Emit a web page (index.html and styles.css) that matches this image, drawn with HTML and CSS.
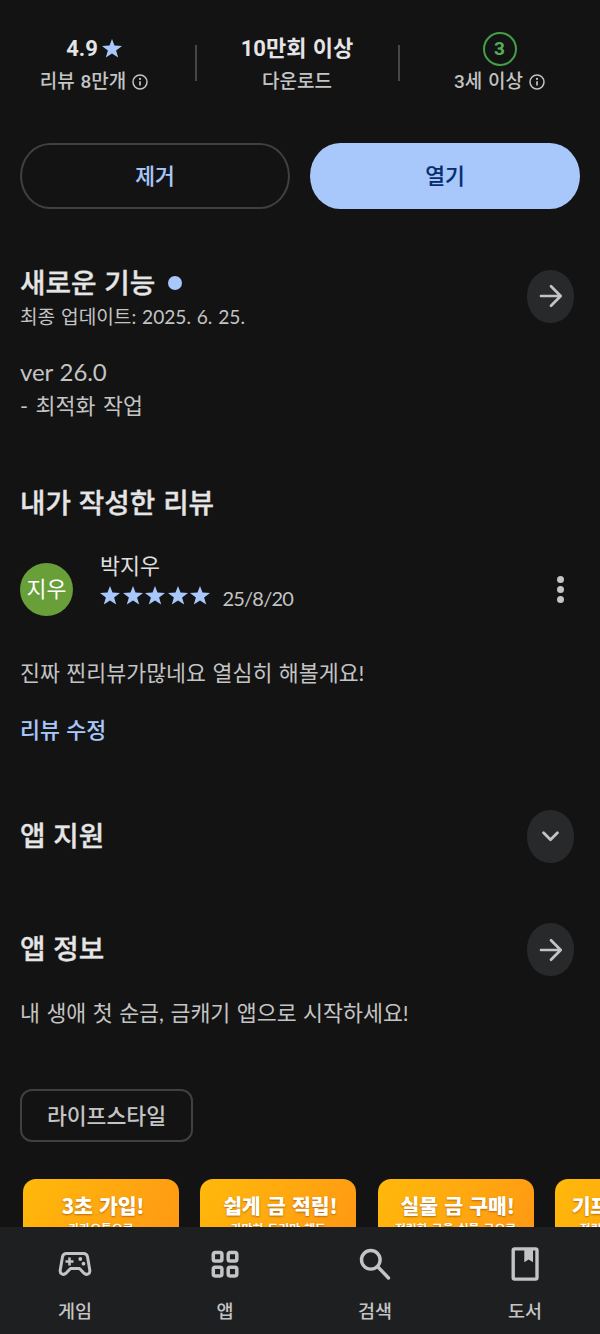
FILE: index.html
```html
<!DOCTYPE html>
<html lang="ko">
<head>
<meta charset="utf-8">
<title>앱 세부정보</title>
<link rel="stylesheet" href="styles.css">
</head>
<body>
<svg class="defs" aria-hidden="true">
  <symbol id="star" viewBox="0 0 20 19"><path d="M10 0l2.500 6.600 7.500.3-5.900 4.500 2.100 7.200L10 14.500l-6.200 4.100 2.100-7.200L0 6.900l7.500-.3z"/></symbol>
  <symbol id="arrow" viewBox="0 0 24 24"><path d="M2 12h19.500M12 2.300l9.700 9.700L12 21.700" fill="none" stroke="currentColor" stroke-width="2.700" stroke-linecap="round" stroke-linejoin="round"/></symbol>
  <symbol id="info" viewBox="0 0 16 16"><circle cx="8" cy="8" r="7" fill="none" stroke="currentColor" stroke-width="1.500"/><path d="M8 7.200v4.300" stroke="currentColor" stroke-width="1.700"/><circle cx="8" cy="4.900" r="1.050"/></symbol>
</svg>
<div class="screen">
  <main class="content">
    <section class="stats">
      <div class="stat stat-rating">
        <div class="stat-value">4.9<svg class="value-star"><use href="#star"/></svg></div>
        <div class="stat-label">리뷰 8만개<svg class="info"><use href="#info"/></svg></div>
      </div>
      <div class="divider"></div>
      <div class="stat">
        <div class="stat-value">10만회 이상</div>
        <div class="stat-label">다운로드</div>
      </div>
      <div class="divider"></div>
      <div class="stat">
        <div class="stat-value"><span class="age">3</span></div>
        <div class="stat-label">3세 이상<svg class="info"><use href="#info"/></svg></div>
      </div>
    </section>

    <div class="actions">
      <button class="btn btn-outline">제거</button>
      <button class="btn btn-filled">열기</button>
    </div>

    <section class="whats-new">
      <header class="head">
        <div>
          <h2 class="title">새로운 기능<span class="dot"></span></h2>
          <p class="updated">최종 업데이트: 2025. 6. 25.</p>
        </div>
        <button class="round"><svg class="icon-arrow"><use href="#arrow"/></svg></button>
      </header>
      <p class="version">ver 26.0</p>
      <p class="body note">- 최적화 작업</p>
    </section>

    <section class="my-review">
      <h2 class="title">내가 작성한 리뷰</h2>
      <div class="reviewer">
        <div class="avatar">지우</div>
        <div class="who">
          <div class="name">박지우</div>
          <div class="rating">
            <svg class="star"><use href="#star"/></svg><svg class="star"><use href="#star"/></svg><svg class="star"><use href="#star"/></svg><svg class="star"><use href="#star"/></svg><svg class="star"><use href="#star"/></svg>
            <span class="date">25/8/20</span>
          </div>
        </div>
        <div class="more"><i></i><i></i><i></i></div>
      </div>
      <p class="body">진짜 찐리뷰가많네요 열심히 해볼게요!</p>
      <a class="edit">리뷰 수정</a>
    </section>

    <section class="head support">
      <h2 class="title">앱 지원</h2>
      <button class="round"><svg class="icon-chevron" viewBox="0 0 16 10"><path d="M1.500 1.500L8 8l6.500-6.500" fill="none" stroke="currentColor" stroke-width="2.600" stroke-linecap="round" stroke-linejoin="round"/></svg></button>
    </section>

    <section class="about">
      <header class="head">
        <h2 class="title">앱 정보</h2>
        <button class="round"><svg class="icon-arrow"><use href="#arrow"/></svg></button>
      </header>
      <p class="body">내 생애 첫 순금, 금캐기 앱으로 시작하세요!</p>
      <span class="chip">라이프스타일</span>
    </section>

    <div class="shots">
      <div class="shot"><b>3초 가입!</b><small>카카오톡으로</small></div>
      <div class="shot"><b>쉽게 금 적립!</b><small>가만히 두기만 해도</small></div>
      <div class="shot"><b>실물 금 구매!</b><small>적립한 금을 실물 금으로</small></div>
      <div class="shot"><b>기프티콘 교환!</b><small>적립한 금을 기프티콘</small></div>
    </div>
  </main>

  <nav class="nav">
    <a class="tab"><svg class="nav-icon" viewBox="0 0 36 36"><path d="M9.500 7.500h17c2.100 0 3.600 1.300 4 3.300l2.300 13.400c.5 3.700-3.300 5.400-5.800 3l-4.500-4.700h-9l-4.500 4.700c-2.500 2.400-6.300.7-5.800-3l2.300-13.400c.4-2 1.900-3.300 4-3.300z" fill="none" stroke="currentColor" stroke-width="3" stroke-linejoin="round"/><path d="M12.500 11.500v8M8.500 15.500h8" stroke="currentColor" stroke-width="2.600"/><circle cx="23.300" cy="13" r="1.900"/><circle cx="26.500" cy="17.700" r="1.900"/></svg><span>게임</span></a>
    <a class="tab"><svg class="nav-icon" viewBox="0 0 36 36"><g fill="none" stroke="currentColor" stroke-width="3.500"><rect x="6.300" y="6.400" width="8.600" height="8.600" rx="1.800"/><rect x="21.200" y="6.400" width="8.600" height="8.600" rx="1.800"/><rect x="6.300" y="21.300" width="8.600" height="8.600" rx="1.800"/><rect x="21.200" y="21.300" width="8.600" height="8.600" rx="1.800"/></g></svg><span>앱</span></a>
    <a class="tab"><svg class="nav-icon" viewBox="0 0 36 36"><g fill="none" stroke="currentColor" stroke-width="3.400" stroke-linecap="round"><circle cx="13.800" cy="13.800" r="9.300"/><path d="M21 21l10.500 11"/></g></svg><span>검색</span></a>
    <a class="tab"><svg class="nav-icon" viewBox="0 0 36 36"><rect x="6.200" y="2.900" width="23.800" height="30.200" rx="1.500" fill="none" stroke="currentColor" stroke-width="3.400"/><path d="M17.300 3h8.700v13.200l-4.350-2.800-4.350 2.800z"/></svg><span>도서</span></a>
  </nav>
</div>
</body>
</html>
```
FILE: styles.css
```css
* { box-sizing: border-box; margin: 0; padding: 0; }
body {
  background: #131313;
  color: #c4c4c4;
  font-family: Lato, "Noto Sans CJK KR", sans-serif;
  font-size: 21.700px;
  word-spacing: .9px;
  white-space: nowrap;
}
svg { display: block; fill: currentColor; flex: none; }
.defs { position: absolute; width: 0; height: 0; }
button { font: inherit; color: inherit; border: 0; background: none; }
.screen { display: flex; flex-direction: column; height: 1334px; width: 600px; overflow: hidden; }
.content { flex: 1; min-height: 0; overflow: hidden; }

.stats { display: grid; grid-template-columns: 195px 1px 202px 1px 201px; padding-top: 31px; height: 143px; font-family: Roboto, "Noto Sans CJK KR", sans-serif; }
.stat-rating { padding-right: 7px; }
.stat-value, .stat-label { display: flex; align-items: center; justify-content: center; }
.stat-value { height: 34px; font-size: 22px; line-height: 34px; padding-top: 1px; font-weight: 700; color: #e5e5e5; }
.stat-label { height: 32px; font-size: 19px; line-height: 30px; padding-top: 2px; font-weight: 500; }
.value-star { width: 20px; height: 19px; margin-left: 4px; color: #a8c7fa; }
.info { width: 16px; height: 16px; margin: 0 0 1px 6px; }
.divider { height: 36px; margin-top: 14px; background: #444746; width: 1.500px; }
.age { width: 34px; height: 34px; border: 2.500px solid #43a047; border-radius: 50%; color: #58ad5c; font-size: 19px; line-height: 30px; text-align: center; }

.actions { display: grid; grid-template-columns: 1fr 1fr; gap: 20px; padding: 0 20px; }
.btn { height: 66px; padding-bottom: 3px; border-radius: 30px / 33px; font-size: 21.500px; font-weight: 500; -webkit-text-stroke: .15px; }
.btn-outline { border: 2px solid #3f4040; color: #a8c7fa; }
.btn-filled { background: #a8c7fa; color: #062e6f; }

.head { display: flex; justify-content: space-between; align-items: center; padding-right: 6px; }
.title { font-size: 27.700px; font-weight: 500; line-height: 40px; color: #e5e5e5; display: flex; align-items: center; -webkit-text-stroke: .35px; }
.dot { width: 14px; height: 14px; border-radius: 50%; background: #a8c7fa; margin-left: 13px; }
.round { width: 47px; height: 53px; border-radius: 23px / 26px; background: #28292a; display: grid; place-items: center; }
.icon-arrow { width: 24px; height: 24px; }
.icon-chevron { width: 17px; height: 11px; }
.body { line-height: 34px; }
.note { word-spacing: 2px; }

.whats-new { padding: 54px 20px 0; }
.whats-new .round { margin-bottom: 1px; }
.updated { font-size: 19.150px; line-height: 27px; }
.version { font-size: 24px; line-height: 34px; margin-top: 25px; letter-spacing: -.1px; }

.my-review { padding: 60px 20px 0; }
.reviewer { display: flex; height: 68px; margin-top: 29px; align-items: center; }
.avatar { width: 53px; height: 53px; margin-top: 6px; padding-bottom: 3px; border-radius: 50%; background: #689f38; color: #fff; display: grid; place-items: center; }
.who { margin-left: 27px; flex: 1; padding-bottom: 13px; }
.name { line-height: 32px; color: #e0e0e0; }
.rating { display: flex; gap: 2.500px; height: 28px; align-items: center; color: #a8c7fa; }
.star { width: 20px; height: 19px; }
.date { font-size: 20px; letter-spacing: -.8px; color: #c4c4c4; margin-left: 10px; line-height: 28px; padding-top: 4px; }
.more { display: grid; gap: 3px; margin: 6px 16.500px 0 0; }
.more i { width: 7px; height: 7px; border-radius: 50%; background: #c4c4c4; }
.my-review .body { margin-top: 36px; }
.edit { display: block; line-height: 34px; margin-top: 23px; color: #a8c7fa; font-weight: 500; -webkit-text-stroke: .1px; }

.support { padding: 63px 26px 0 20px; }
.support .title, .about .title { padding-bottom: 2px; }
.about { padding: 60px 20px 0; }
.about .body { margin-top: 20px; }
.chip { display: inline-block; height: 53px; width: 173px; margin-top: 59px; border: 2px solid #3f4040; border-radius: 12px; text-align: center; line-height: 50px; font-weight: 500; font-size: 21.600px; vertical-align: top; }

.shots { display: flex; gap: 21.300px; padding: 37px 0 0 23px; }
.shot { flex: none; width: 156px; height: 260px; border-radius: 13px; background: linear-gradient(120deg, #ffb90a, #ff9914 60%, #ff8a1c); color: #fff; display: flex; flex-direction: column; align-items: center; padding: 11px 0 0 4px; text-shadow: 0 1px 2px #85430099; }
.shot b { font: 900 20.500px/30px "Noto Sans CJK KR", sans-serif; letter-spacing: -.2px; }
.shot small { font: 700 11.800px/15px "Noto Sans CJK KR", sans-serif; margin-left: -4px; }

.nav { display: grid; grid-template-columns: repeat(4, 150px); height: 107px; background: #1e1f20; flex: none; }
.tab { display: flex; flex-direction: column; align-items: center; padding-top: 19px; font-size: 18.500px; font-weight: 500; }
.nav-icon { width: 36px; height: 36px; }
.tab span { line-height: 28px; margin-top: 15px; }
```
